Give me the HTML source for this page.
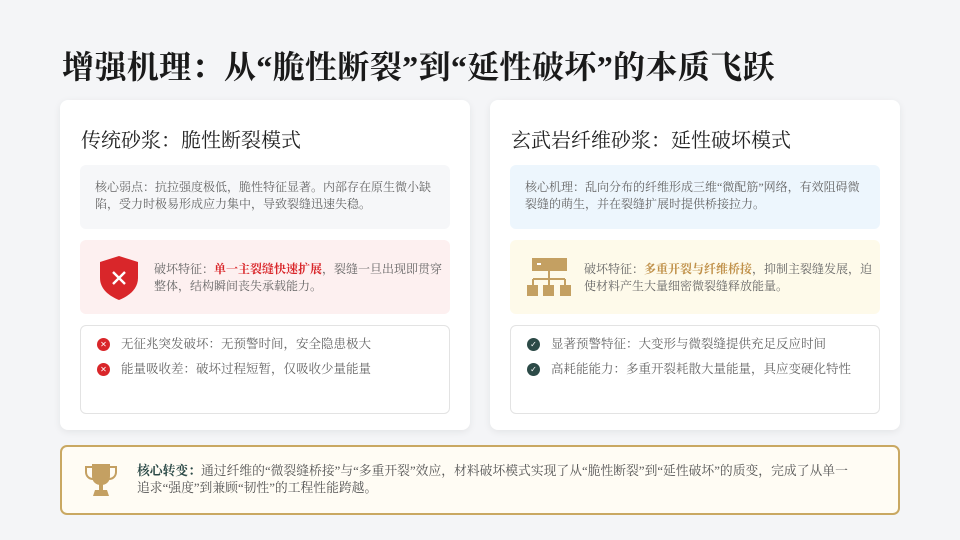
<!DOCTYPE html>
<html><head><meta charset="utf-8"><style>
*{margin:0;padding:0;box-sizing:border-box}
body{width:960px;height:540px;background:#f4f5f7;font-family:"Liberation Serif","Noto Serif CJK SC",serif;position:relative;overflow:hidden;color:#333}
.title{position:absolute;left:62px;top:42px;font-size:32.1px;font-weight:bold;color:#1a1a1a;letter-spacing:0.3px;white-space:nowrap}
.card{position:absolute;top:100px;width:410px;height:330px;background:#fff;border-radius:8px;box-shadow:0 2px 8px rgba(0,0,0,.07)}
.card h2{position:absolute;left:21px;top:24px;font-size:20px;font-weight:normal;color:#222;white-space:nowrap}
.b{position:absolute;left:20px;width:370px;border-radius:6px;font-size:12px;line-height:17px;color:#666}
.b1{top:65px;height:64px;padding:14px 15px}
.b2{top:140px;height:74px}
.b2 .t{position:absolute;left:74px;top:21px;right:2px}
.b3{top:225px;height:89px;border:1.5px solid #e3e3e3;background:#fff}
.li{position:absolute;left:16px;display:flex;align-items:center;font-size:12.5px;color:#666;white-space:nowrap}
.dot{width:13px;height:13px;border-radius:50%;margin-right:11px;display:flex;align-items:center;justify-content:center;color:#fff;font-size:8px;font-family:"DejaVu Sans",sans-serif}
.foot{position:absolute;left:60px;top:445px;width:840px;height:70px;border:2px solid #c9a862;border-radius:7px;background:#fffcf4}
.foot .t{position:absolute;left:75px;top:16px;right:24px;font-size:12.8px;line-height:17px;color:#555}
</style></head><body>
<div class="title">增强机理：从“脆性断裂”到“延性破坏”的本质飞跃</div>

<div class="card" style="left:60px">
<h2>传统砂浆：脆性断裂模式</h2>
<div class="b b1" style="background:#f6f7f9">核心弱点：抗拉强度极低，脆性特征显著。内部存在原生微小缺陷，受力时极易形成应力集中，导致裂缝迅速失稳。</div>
<div class="b b2" style="background:#fdf0f0">
<svg style="position:absolute;left:19px;top:16px" width="40" height="44" viewBox="0 0 40 44"><path d="M20 0 L39 6 V22 C39 33 30 40 20 44 C10 40 1 33 1 22 V6 Z" fill="#d9262a"/><path d="M14 16 L26 28 M26 16 L14 28" stroke="#fff" stroke-width="2.4"/></svg>
<div class="t">破坏特征：<b style="color:#d9262a">单一主裂缝快速扩展</b>，裂缝一旦出现即贯穿整体，结构瞬间丧失承载能力。</div></div>
<div class="b b3">
<div class="li" style="top:10px"><span class="dot" style="background:#d9262a">✕</span>无征兆突发破坏：无预警时间，安全隐患极大</div>
<div class="li" style="top:35px"><span class="dot" style="background:#d9262a">✕</span>能量吸收差：破坏过程短暂，仅吸收少量能量</div>
</div></div>

<div class="card" style="left:490px">
<h2>玄武岩纤维砂浆：延性破坏模式</h2>
<div class="b b1" style="background:#edf6fd">核心机理：乱向分布的纤维形成三维“微配筋”网络，有效阻碍微裂缝的萌生，并在裂缝扩展时提供桥接拉力。</div>
<div class="b b2" style="background:#fefaea">
<svg style="position:absolute;left:17px;top:18px" width="44" height="39" viewBox="0 0 44 39"><rect x="5" y="0" width="35" height="13" fill="#c4a062"/><rect x="10" y="5" width="4" height="2" fill="#fff"/><path d="M22 13 V21 M6 21 H38 M6 21 V27 M22 21 V27 M38 21 V27" stroke="#c4a062" stroke-width="2" fill="none"/><rect x="0" y="27" width="11" height="11" fill="#c4a062"/><rect x="16" y="27" width="11" height="11" fill="#c4a062"/><rect x="33" y="27" width="11" height="11" fill="#c4a062"/></svg>
<div class="t">破坏特征：<b style="color:#c0914a">多重开裂与纤维桥接</b>，抑制主裂缝发展，迫使材料产生大量细密微裂缝释放能量。</div></div>
<div class="b b3">
<div class="li" style="top:10px"><span class="dot" style="background:#2c4a47">✓</span>显著预警特征：大变形与微裂缝提供充足反应时间</div>
<div class="li" style="top:35px"><span class="dot" style="background:#2c4a47">✓</span>高耗能能力：多重开裂耗散大量能量，具应变硬化特性</div>
</div></div>

<div class="foot">
<svg style="position:absolute;left:21px;top:15px" width="36" height="36" viewBox="0 0 36 36"><path d="M9 2 H27 V14 C27 20 23 23 18 23 C13 23 9 20 9 14 Z" fill="#c4a062"/><path d="M9 5 H3 V10 C3 14 6 17 10 17 M27 5 H33 V10 C33 14 30 17 26 17" stroke="#c4a062" stroke-width="2" fill="none"/><rect x="16" y="22" width="4" height="6" fill="#c4a062"/><path d="M12 28 H24 L26 34 H10 Z" fill="#c4a062"/></svg>
<div class="t"><b style="color:#2c4a47">核心转变：</b>通过纤维的“微裂缝桥接”与“多重开裂”效应，材料破坏模式实现了从“脆性断裂”到“延性破坏”的质变，完成了从单一<br>追求“强度”到兼顾“韧性”的工程性能跨越。</div>
</div>
</body></html>
